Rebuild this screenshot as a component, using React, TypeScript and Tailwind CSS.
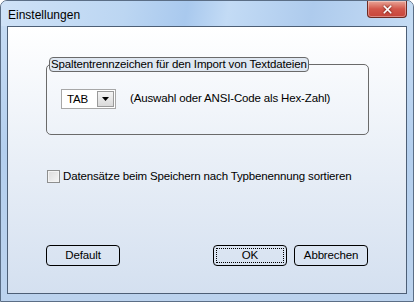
import { X } from "lucide-react";

const font = "font-['Liberation_Sans',Arial,sans-serif]";

function DialogButton({ label, focused }: { label: string; focused?: boolean }) {
  return (
    <button className="h-[21px] w-[74px] rounded-[4px] border border-black bg-transparent p-[2px] text-[11.5px] text-black">
      <div
        className={
          "flex h-full w-full items-center justify-center " +
          (focused ? "border border-dotted border-black" : "")
        }
      >
        {label}
      </div>
    </button>
  );
}

export default function App() {
  return (
    <div className={`${font} flex h-[302px] w-[414px] flex-col overflow-hidden rounded-t-[7px] border border-[#5b6e86] bg-gradient-to-b from-[#c9def5] via-[#b4cfee] to-[#bcd3ee]`}>
      {/* title bar */}
      <div className="flex h-[25px] shrink-0 items-start justify-between bg-[linear-gradient(100deg,#cfe2f7_0%,#bcd6f2_30%,#a9c9ee_45%,#c3dbf5_55%,#aecbed_75%,#c5dcf4_100%)]">
        <span className="pl-[7px] pt-[5px] text-[12px] text-black">Einstellungen</span>
        <div className="mr-[6px] flex h-[17px] w-[40px] items-center justify-center rounded-b-[4px] border border-t-0 border-[#6d2a22] bg-gradient-to-b from-[#e8a598] via-[#d2564a] to-[#c7453a] shadow-[inset_0_0_0_1px_rgba(255,255,255,0.35)]">
          <X size={13} strokeWidth={3.2} className="text-white drop-shadow-[0_0_1px_#5a1a14]" />
        </div>
      </div>

      {/* client area */}
      <div className="mx-[6px] mb-[7px] flex flex-1 flex-col border border-[#4d5f76] bg-gradient-to-b from-white via-[#e9eff7] to-[#d4e0f0] text-[11.5px] tracking-[-0.15px]">
        <fieldset className="ml-[38px] mt-[30px] h-[78px] w-[323px] rounded-[5px] border border-[#6a6a6a] px-[2px]">
          <legend className="rounded-[4px] border border-[#6a6a6a] bg-[#dfe7f1] px-[1px] leading-[13px] text-black">
            Spaltentrennzeichen für den Import von Textdateien
          </legend>
          <div className="ml-[12px] mt-[17px] flex items-center gap-[14px]">
            <div className="flex h-[20px] w-[55px] border border-[#a7a7a7] bg-white p-[1px]">
              <span className="flex-1 pl-[4px] leading-[16px] text-black">TAB</span>
              <div className="flex h-[16px] w-[17px] items-center justify-center border border-[#9a9a9a] bg-gradient-to-b from-[#f4f4f4] to-[#dadada]">
                <svg width="7" height="4" viewBox="0 0 7 4">
                  <path d="M0 0h7L3.5 4z" fill="#000" />
                </svg>
              </div>
            </div>
            <span className="text-black">(Auswahl oder ANSI-Code als Hex-Zahl)</span>
          </div>
        </fieldset>

        <label className="ml-[39px] mt-[33px] flex items-center gap-[3px] text-black">
          <span className="h-[13px] w-[13px] border border-[#8e8f8f] bg-gradient-to-br from-[#dcdcdc] to-[#f6f6f6] shadow-[inset_0_0_0_1px_#f4f4f4]" />
          Datensätze beim Speichern nach Typbenennung sortieren
        </label>

        <div className="mt-auto mb-[27px] flex px-[38px]">
          <DialogButton label="Default" />
          <div className="flex-1" />
          <div className="flex gap-[7px]">
            <DialogButton label="OK" focused />
            <DialogButton label="Abbrechen" />
          </div>
        </div>
      </div>
    </div>
  );
}
